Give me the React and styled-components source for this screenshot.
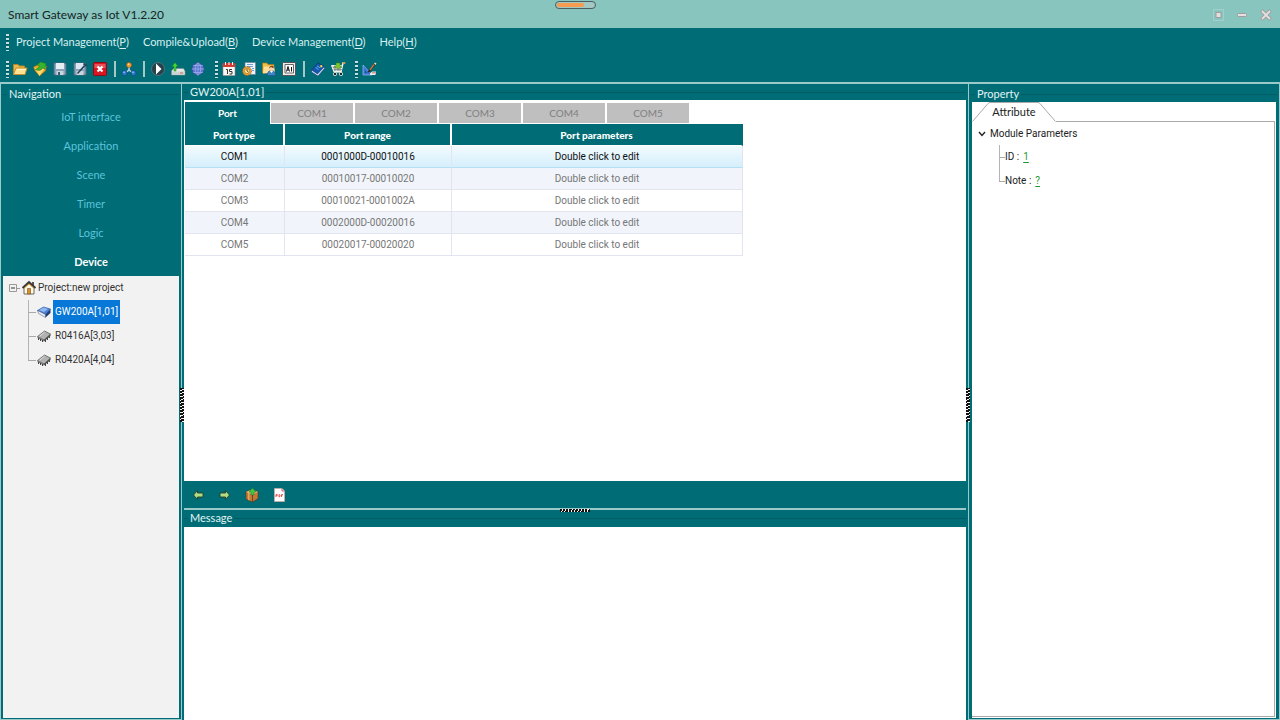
import React, { useState } from 'react';
import styled, { createGlobalStyle } from 'styled-components';

const teal = '#006c75';
const edge = '#9ccaca';
const dataFont = 'Roboto, "Liberation Sans", sans-serif';

const GlobalStyle = createGlobalStyle`
  * { box-sizing: border-box; }
  body {
    margin: 0;
    background: ${teal};
    font-family: Lato, "Open Sans", sans-serif;
    font-size: 11px;
    line-height: 16px;
    color: #333;
  }
  button { font: inherit; color: inherit; border: 0; padding: 0; background: none; cursor: pointer; }
`;

const Window = styled.div`
  min-height: 100vh;
  display: flex;
  flex-direction: column;
`;

const TitleBar = styled.header`
  position: relative;
  display: flex;
  align-items: center;
  justify-content: space-between;
  height: 28px;
  padding: 2px 4px 0 8px;
  background: #87c5be;
`;

const WindowTitle = styled.h1`
  margin: 0;
  font-size: 12px;
  font-weight: 400;
  color: #142424;
`;

const ProgressPill = styled.div`
  position: absolute;
  top: 1px;
  left: 555px;
  width: 41px;
  height: 8px;
  padding: 1px;
  border: 1px solid #4c5f60;
  border-radius: 4px;
  background: #a3c8c4;
  &::after {
    content: '';
    display: block;
    width: 27px;
    height: 4px;
    border-radius: 2px;
    background: #f79b4e;
  }
`;

const WindowButtons = styled.div`
  display: flex;
  align-items: center;
  gap: 4px;
`;

const WindowButton = styled.button`
  width: 20px;
  height: 20px;
  display: grid;
  place-items: center;
`;

const MenuBar = styled.nav`
  display: flex;
  align-items: center;
  height: 28px;
  padding-left: 4px;
  color: #d9f0f0;
`;

const MenuButton = styled.button`
  margin-right: 14px;
  white-space: nowrap;
  u { text-underline-offset: 2px; }
`;

const Grip = styled.span`
  width: 3px;
  height: 17px;
  margin: 0 ${p => p.$after}px 0 ${p => p.$before}px;
  background: repeating-linear-gradient(#c9dfdf 0 2px, #00525a 2px 3px, ${teal} 3px 4px);
`;

const ToolBar = styled.div`
  display: flex;
  align-items: center;
  height: 26px;
  padding-left: 4px;
`;

const ToolButton = styled.button`
  width: 20px;
  height: 20px;
  display: grid;
  place-items: center;
`;

const Divider = styled.span`
  width: 2px;
  height: 16px;
  margin: 0 3px 0 4px;
  background: #a8c8c6;
`;

const Workspace = styled.main`
  flex: 1;
  display: grid;
  grid-template-columns: 182px minmax(0, 1fr) 312px;
  border-top: 2px solid ${edge};
`;

const SidePanel = styled.aside`
  position: relative;
  display: flex;
  flex-direction: column;
  padding: 2px 2px 1px;
  border: solid ${edge};
  border-width: 0 1px 1px;
`;

const CenterPanel = styled.section`
  display: flex;
  flex-direction: column;
  padding: 0 2px;
`;

const GroupTitle = styled.h2`
  display: flex;
  align-items: center;
  margin: 0;
  height: 16px;
  font-size: 11px;
  font-weight: 400;
  color: #e3f4f4;
  white-space: nowrap;
  &::before, &::after {
    content: '';
    height: 1px;
    background: #005c65;
  }
  &::before { width: 4px; margin-right: 2px; }
  &::after { flex: 1; margin-left: 2px; }
`;

const NavList = styled.nav`
  display: flex;
  flex-direction: column;
`;

const NavItem = styled.button`
  height: 29px;
  font-weight: ${p => (p.$active ? 700 : 400)};
  color: ${p => (p.$active ? '#fff' : '#5bc4dc')};
`;

const Tree = styled.div`
  flex: 1;
  padding: 0 6px;
  font-family: ${dataFont};
  font-size: 10px;
  background: #f2f2f2;
`;

const TreeRoot = styled.button`
  display: flex;
  align-items: center;
  height: 24px;
  gap: 1px;
  white-space: nowrap;
`;

const TreeBranch = styled.ul`
  list-style: none;
  margin: 0 0 0 ${p => p.$indent}px;
  padding: 0;
`;

const TreeNode = styled.li`
  display: flex;
  align-items: center;
  height: 24px;
  background:
    linear-gradient(#aaa, #aaa) 0 50% / ${p => p.$stem || 8}px 1px no-repeat,
    linear-gradient(#b4b4b4, #b4b4b4) 0 0 / 1px ${p => (p.$last ? '50%' : '100%')} no-repeat;
  padding-left: ${p => p.$stem || 8}px;
`;

const TreeLabel = styled.button`
  height: 24px;
  margin-left: 1px;
  padding: 0 2px;
  white-space: nowrap;
  color: ${p => (p.$selected ? '#fff' : '#333')};
  background: ${p => (p.$selected ? '#0878d8' : 'transparent')};
`;

const PortArea = styled.div`
  flex: 381 1 0;
  padding: 2px 1px;
  background: #fff;
`;

const TabStrip = styled.div`
  display: flex;
  height: 22px;
`;

const Tab = styled.button`
  width: ${p => (p.$active ? 85 : 84)}px;
  height: ${p => (p.$active ? 22 : 21)}px;
  align-self: flex-end;
  border: solid #fff;
  border-width: ${p => (p.$active ? '0' : '0 1px 1px')};
  font-weight: ${p => (p.$active ? 700 : 400)};
  color: ${p => (p.$active ? '#fff' : '#808080')};
  background: ${p => (p.$active ? teal : '#bfbfbf')};
  font-size: 10px;
`;

const PortTable = styled.table`
  width: 558px;
  table-layout: fixed;
  border-collapse: separate;
  border-spacing: 0;
  text-align: center;
  font-family: ${dataFont};
  font-size: 10px;
  th, td { height: 22px; padding: 0; }
  th {
    font-family: Lato, sans-serif;
    font-weight: 900;
    color: #fff;
    background: ${teal};
    border-right: 2px solid #fff;
    border-bottom: 1px solid #fff;
  }
  th:last-child { border-right-color: ${teal}; }
`;

const PortRow = styled.tr`
  color: ${p => (p.$selected ? '#111' : '#777')};
  background: ${p => (p.$selected ? 'linear-gradient(#f3fbff, #d3eefb)' : p.$striped ? '#f1f5fb' : '#fff')};
  td {
    border-right: 1px solid #e2e5f0;
    border-bottom: 1px solid ${p => (p.$selected ? '#b4e0f5' : '#e2e5f0')};
  }
`;

const ActionBar = styled.div`
  display: flex;
  align-items: center;
  height: 27px;
  gap: 7px;
  padding-left: 4px;
`;

const MessageSection = styled.section`
  position: relative;
  flex: 212 1 0;
  display: flex;
  flex-direction: column;
  border-top: 2px solid ${edge};
`;

const MessageLog = styled.div`
  flex: 1;
  margin-top: 1px;
  background: #fff;
`;

const VerticalSash = styled.span`
  position: absolute;
  top: calc(50% - 14px);
  ${p => p.$side}: -3px;
  width: 4px;
  height: 34px;
  background: repeating-linear-gradient(160deg, #111 0 2px, #f4f4f4 2px 3px);
`;

const HorizontalSash = styled.span`
  position: absolute;
  top: -1px;
  left: calc(50% - 15px);
  width: 30px;
  height: 3px;
  background: repeating-linear-gradient(110deg, #111 0 2px, #f4f4f4 2px 3px);
`;

const PropertyBody = styled.div`
  flex: 1;
  display: flex;
  flex-direction: column;
  margin: 0 1px 0 1px;
  padding: 0 1px 1px 0;
  background: #fff;
`;

const AttributeStrip = styled.div`
  display: flex;
  align-items: flex-end;
  height: 20px;
  &::after {
    content: '';
    flex: 1;
    height: 1px;
    background: #aaa;
  }
`;

const AttributeTab = styled.button`
  position: relative;
  width: 84px;
  height: 20px;
  color: #222;
  svg { position: absolute; inset: 0; }
`;

const AttributePane = styled.div`
  flex: 1;
  padding: 0 6px;
  border: solid #aaa;
  border-width: 0 1px 1px 0;
  font-size: 10px;
  font-family: ${dataFont};
  color: #222;
`;

const ParamHeading = styled.button`
  display: flex;
  align-items: center;
  gap: 4px;
  height: 23px;
`;

const ValueLink = styled.a`
  margin-left: 4px;
  color: #1d9a2b;
  text-underline-offset: 2px;
`;

const ParamText = styled.span`
  white-space: nowrap;
`;

const Icon = ({ children }) => (
  <svg width="16" height="16" viewBox="0 0 16 16" fill="none" aria-hidden="true">{children}</svg>
);

const icons = {
  open: (
    <>
      <path d="M1.500 12.500V3.500h4.500l1.500 1.500h5v2" fill="#e9b84c" stroke="#b98524" />
      <path d="M1.500 13.500 4 7h11l-2 6.500z" fill="#ffe294" stroke="#c98e2b" />
      <path d="M5 8.500h8.500" stroke="#fff4c8" />
    </>
  ),
  save2: (
    <>
      <path d="M1.500 6 7 3l7.500 2-1 5-6 5-4.500-5z" fill="#e7a624" stroke="#8d651b" strokeWidth=".6" />
      <path d="m2 6 5 3.500 7-4L7.500 15z" fill="#ffd96a" />
      <path d="M8.500 1 14 2.500 13 8l-2.500-1C9.500 9.500 7 10 3.500 8.500 6.500 7.500 7.500 5.500 7.200 4.800L5 4z" fill="#35b52d" stroke="#1b7720" strokeWidth=".5" />
    </>
  ),
  save: (
    <>
      <path d="M2 2h11l1 1v11H2z" fill="#8ba3b8" stroke="#4b6b84" />
      <path d="M4 2h8v6H4z" fill="#e6eef3" />
      <path d="M4.500 10h7v4h-7z" fill="#c9d5dc" />
      <path d="M6 11h2v3H6z" fill="#3d5d73" />
    </>
  ),
  saveAs: (
    <>
      <path d="M2 2h11l1 1v11H2z" fill="#8ba3b8" stroke="#4b6b84" />
      <path d="M4 2h8v6H4z" fill="#dbe6ee" />
      <path d="M4.500 10h7v4h-7z" fill="#c9d5dc" />
      <path d="m5 12 7-8 1.500 1L6 13z" fill="#27445f" />
      <path d="M11.500 2.500 15 5" stroke="#27445f" strokeWidth="2" />
    </>
  ),
  close: (
    <>
      <rect x="1.500" y="1.500" width="13" height="13" rx="1" fill="#d81520" stroke="#870d16" />
      <path d="M2.500 3h11v4h-11z" fill="#e9515a" />
      <path d="m5.500 5.500 5 5m0-5-5 5" stroke="#fff" strokeWidth="2.200" />
    </>
  ),
  network: (
    <>
      <path d="M8 4v5l-4 3m4-3 4 3" stroke="#b8d4ef" strokeWidth="1.500" />
      <circle cx="8" cy="4" r="2.500" fill="#eda237" stroke="#9c5614" strokeWidth=".6" />
      <circle cx="3.500" cy="12" r="2.500" fill="#2d7cd1" stroke="#103e7c" strokeWidth=".6" />
      <circle cx="12.500" cy="12" r="2.500" fill="#2d7cd1" stroke="#103e7c" strokeWidth=".6" />
      <circle cx="7.500" cy="3.200" r=".8" fill="#ffe09b" /><circle cx="3" cy="11.200" r=".8" fill="#a7d5ff" /><circle cx="12" cy="11.200" r=".8" fill="#a7d5ff" />
    </>
  ),
  play: (
    <>
      <circle cx="8" cy="8" r="6.500" fill="#26414a" stroke="#52717a" />
      <path d="M6 2.500 11.500 8 6 13.500z" fill="#fff" />
    </>
  ),
  upload: (
    <>
      <path d="m1.500 10 2-2.500h10l1.500 2.500v4H1.500z" fill="#e4e9e8" stroke="#7c8a8b" strokeWidth=".7" />
      <path d="M2 10.500h12.500v3H2z" fill="#cbd4d2" />
      <path d="M10 12h3" stroke="#d26e62" />
      <path d="M4 10V5.500H2L5 1.500l3 4H6V10z" fill="#45d53a" stroke="#15851f" strokeWidth=".5" />
    </>
  ),
  globe: (
    <>
      <circle cx="8" cy="8" r="6" fill="#5a74cb" stroke="#3b50a0" />
      <ellipse cx="8" cy="8" rx="2.800" ry="6" stroke="#9aaeea" strokeWidth=".8" />
      <path d="M2 8h12M3.200 4.500h9.600M3.200 11.500h9.600M8 2v12" stroke="#9aaeea" strokeWidth=".8" />
    </>
  ),
  calendar: (
    <>
      <path d="M2 3h12v11.500H2z" fill="#faf8f4" stroke="#9a8f8b" strokeWidth=".6" />
      <path d="M2 2h12v4H2z" fill="#d63b32" />
      <path d="M4.500 1v3M8 1v3m3.500-3v3" stroke="#fff" />
      <path d="M5 8.500h1.500V13M11 8.500H8.500v2H11V13H8.500" stroke="#343434" />
    </>
  ),
  report: (
    <>
      <path d="M4 1.500h10.500v12H4z" fill="#eff3f8" stroke="#6983a5" strokeWidth=".7" />
      <path d="M6 3.500h6M6 5.500h6m-1 2h2m-2 2h2" stroke="#6aa2d8" />
      <circle cx="6" cy="10" r="4.500" fill="#dfa03b" stroke="#8a5615" strokeWidth=".7" strokeDasharray="1.500 .8" />
      <circle cx="6" cy="10" r="2.500" fill="#ffe4a0" stroke="#a86d19" strokeWidth=".6" />
      <path d="M6 8v2l1.500 1" stroke="#7b4c16" />
    </>
  ),
  userFolder: (
    <>
      <path d="M1.500 12V2H6l1 1.500h6V12z" fill="#f2bd47" stroke="#a87520" strokeWidth=".7" />
      <path d="M3 5.500h10l1 6-12 1z" fill="#ffe09a" />
      <path d="M6.500 14.500c0-4 1.500-5 4-5s4 1.500 4 5z" fill="#3f85ca" stroke="#1c5086" strokeWidth=".6" />
      <circle cx="10.500" cy="7.500" r="2.500" fill="#ffd2a5" />
      <path d="M8 7.500c0-3 4.500-4 5-1l-1 .5-2-1z" fill="#784225" />
      <path d="m9 10 1.500 2 1.500-2z" fill="#fff" />
    </>
  ),
  textBox: (
    <>
      <path d="M1.500 1.500h13v13h-13z" fill="#eee" stroke="#555" />
      <path d="M4 3.500h8.500v8.500H4z" fill="#fff" stroke="#666" />
      <path d="M5.500 10.500 7 5.500l1.500 5M6 9h2m2.500-3v4.500" stroke="#111" />
    </>
  ),
  book: (
    <>
      <path d="m1.500 9 6.500-7 6.500 3.500-6.500 8z" fill="#1458ae" stroke="#082c69" strokeWidth=".6" />
      <path d="m1.500 9 6 4 7-7.500V7.500L8 15l-6.500-4z" fill="#e1ecf4" stroke="#123f86" strokeWidth=".6" />
      <path d="m5.500 6.500 3 2m-1.500-3.500 3 1.700" stroke="#65aeee" />
      <path d="m10 4.500 2-.5.500 2-2 .5z" fill="#ffd83a" />
    </>
  ),
  cart: (
    <>
      <path d="M1.500 4.500H12L11 11H4z" fill="#c9d0cc" stroke="#eef3ec" />
      <path d="M15 2h-2l-2 8.500H4.500" stroke="#eef3ec" strokeWidth="1.500" />
      <path d="M3 6.500h9M4 8.500h8M5 5v5m3-5v5m2-5v5" stroke="#6a7a72" strokeWidth=".7" />
      <path d="M8 0v2h2v3h2L8 8 4 5h2V2h2z" fill="#7cc52f" stroke="#33731e" strokeWidth=".4" />
      <path d="M13 2h2.500" stroke="#dd7d30" strokeWidth="1.500" />
      <circle cx="5" cy="13" r="1.700" fill="#202a29" stroke="#e9eeee" strokeWidth=".8" /><circle cx="11" cy="13" r="1.700" fill="#202a29" stroke="#e9eeee" strokeWidth=".8" />
    </>
  ),
  design: (
    <>
      <path d="M2 4v10h9z" fill="#3e71d6" stroke="#9cbcff" strokeWidth=".7" />
      <path d="M4 9.500V12h2.500z" fill="#006c75" />
      <path d="m6.500 11 6.500-8.500 1.500 1L8.500 11.500z" fill="#33261f" />
      <path d="m8.500 8.500 4-5.500 1 1-4 5.500z" fill="#d27835" />
      <path d="m13 2.500 1-1 1.500 1-1 1.500z" fill="#f8d9b8" />
      <path d="m9 12.500 2-2h4V13l-1 1H9z" fill="#eceff0" /><path d="M11 11h4v1.500h-4z" fill="#d99a91" />
    </>
  ),
  back: <path d="M7.500 3.500 3.500 8l4 4.500V10H13V6H7.500z" fill="#b2dc85" stroke="#263f26" strokeWidth=".9" />,
  forward: <path d="M8.500 3.500 12.500 8l-4 4.500V10H3V6h5.500z" fill="#b2dc85" stroke="#263f26" strokeWidth=".9" />,
  pack: (
    <>
      <path d="m2 5 6-2.500L14 5v6.500L8.500 15 2 12z" fill="#c07a38" stroke="#673916" strokeWidth=".6" />
      <path d="m2 5 6.500 2.500L14 5 8 2.500z" fill="#efbd73" />
      <path d="M8.500 7.500V15" stroke="#744219" /><path d="m4 6 1.500.6v7L4 13z" fill="#e1a65d" />
      <path d="M7 8V5H5l3.500-4L12 5h-2v3z" fill="#41c842" stroke="#19752a" strokeWidth=".5" />
    </>
  ),
  pdf: (
    <>
      <path d="M3.500 1.500H11L13.500 4v10.500h-10z" fill="#fff" stroke="#d8a9ab" strokeWidth=".7" />
      <path d="M11 1.500V4h2.500" fill="#eee" stroke="#b52c35" strokeWidth=".7" />
      <path d="M5 10V7.500h1.200v1.200H5m3 1.300V7.500c1.500 0 1.500 2.500 0 2.500m2.500 0V7.500H12m-1.500 1.200h1" stroke="#d43a40" strokeWidth=".8" />
    </>
  ),
  home: (
    <>
      <path d="M3 7.500 8 3l5 4.500V14H3z" fill="#fff8e6" stroke="#4c4540" strokeWidth=".8" />
      <path d="M11 2h2v4h-2z" fill="#555" /><path d="M1.500 8 8 2l6.500 6" stroke="#3b3938" strokeWidth="1.800" />
      <path d="M3.500 8 8 4l4.500 4" stroke="#e3a32e" /><path d="M6.500 8.500h3V14h-3z" fill="#d89028" stroke="#76501c" strokeWidth=".6" />
    </>
  ),
  gateway: (
    <>
      <path d="m1.500 6.500 6-3.500 7 2-4.500 5.500z" fill="#4d80d4" stroke="#264d91" strokeWidth=".6" />
      <path d="m3 6.200 4.500-2.700L12 5 8 8z" fill="#8eb9f5" />
      <path d="M1.500 6.500 9.500 10.500v3L2.500 9.500z" fill="#e9eef6" stroke="#44546d" strokeWidth=".5" /><path d="m9.500 10.500 5-5.500v4l-5 4.500z" fill="#1f3f78" />
    </>
  ),
  chip: (
    <>
      <path d="m1.500 8.500 7-5.500 6 3-6.500 6z" fill="#b1b1b1" stroke="#555" strokeWidth=".7" />
      <path d="M1.500 8.500 8 12v1.500L1.500 10z" fill="#777" /><path d="m8 12 6.500-6v2L8 13.500z" fill="#4a4a4a" />
      <path d="M2.500 10v2m2-1v2m2-1v2m3-2v2m2-4v2m2-3.500V10" stroke="#333" strokeWidth=".9" /><path d="m3.500 8.300 5-4" stroke="#ddd" />
    </>
  ),
};

const toolGroups = [
  [['open', 'Open project'], ['save2', 'Import project'], ['save', 'Save'], ['saveAs', 'Save as'], ['close', 'Close project']],
  [['network', 'Topology']],
  [['play', 'Run'], ['upload', 'Upload'], ['globe', 'Network']],
  [['calendar', 'Schedule'], ['report', 'Report'], ['userFolder', 'Users'], ['textBox', 'Labels']],
  [['book', 'Manual'], ['cart', 'Store']],
  [['design', 'Design']],
];

const actions = [['back', 'Back'], ['forward', 'Forward'], ['pack', 'Pack'], ['pdf', 'Export PDF']];
const menus = [['Project Management', 'P'], ['Compile&Upload', 'B'], ['Device Management', 'D'], ['Help', 'H']];
const sections = ['IoT interface', 'Application', 'Scene', 'Timer', 'Logic', 'Device'];
const devices = [['GW200A[1,01]', 'gateway'], ['R0416A[3,03]', 'chip'], ['R0420A[4,04]', 'chip']];
const tabs = ['Port', 'COM1', 'COM2', 'COM3', 'COM4', 'COM5'];
const ports = [
  ['COM1', '0001000D-00010016'],
  ['COM2', '00010017-00010020'],
  ['COM3', '00010021-0001002A'],
  ['COM4', '0002000D-00020016'],
  ['COM5', '00020017-00020020'],
];

function TopBars() {
  return (
    <>
      <TitleBar>
        <WindowTitle>Smart Gateway as Iot V1.2.20</WindowTitle>
        <ProgressPill />
        <WindowButtons>
          <WindowButton aria-label="Restore">
            <Icon><path d="M3.500 2.500h10v11h-10z" stroke="#a2d0ca" /><path d="M6 5.500h5v5H6z" fill="#e4dfe0" stroke="#a29b9c" /></Icon>
          </WindowButton>
          <WindowButton aria-label="Minimize">
            <Icon><rect x="3.500" y="6.500" width="9" height="3" rx="1" fill="#e4dfe0" stroke="#a29b9c" /></Icon>
          </WindowButton>
          <WindowButton aria-label="Close">
            <Icon>
              <path d="m3.500 3.500 9 9m0-9-9 9" stroke="#a29b9c" strokeWidth="3.600" />
              <path d="m4 4 8 8m0-8-8 8" stroke="#e4dfe0" strokeWidth="1.800" />
            </Icon>
          </WindowButton>
        </WindowButtons>
      </TitleBar>
      <MenuBar>
        <Grip $before={2} $after={7} />
        {menus.map(([name, key]) => (
          <MenuButton key={name}>{name}(<u>{key}</u>)</MenuButton>
        ))}
      </MenuBar>
      <ToolBar>
        {toolGroups.map((group, i) => (
          <React.Fragment key={i}>
            {i === 0 && <Grip $before={2} $after={1} />}
            {(i === 1 || i === 2 || i === 4) && <Divider />}
            {(i === 3 || i === 5) && <Grip $before={7} $after={1} />}
            {group.map(([icon, label]) => (
              <ToolButton key={icon} aria-label={label}><Icon>{icons[icon]}</Icon></ToolButton>
            ))}
          </React.Fragment>
        ))}
      </ToolBar>
    </>
  );
}

function Navigation() {
  const [device, setDevice] = useState(0);
  return (
    <SidePanel>
      <GroupTitle>Navigation</GroupTitle>
      <NavList>
        {sections.map(name => <NavItem key={name} $active={name === 'Device'}>{name}</NavItem>)}
      </NavList>
      <Tree>
        <TreeRoot>
          <svg width="11" height="16" viewBox="0 0 11 16" fill="none" aria-hidden="true">
            <path d="M.5 4.500h7v7h-7zM8 8.500h3" stroke="#999" /><path d="M2 8h4" stroke="#333" />
          </svg>
          <Icon>{icons.home}</Icon>
          <span>Project:new project</span>
        </TreeRoot>
        <TreeBranch $indent={19}>
          {devices.map(([name, icon], i) => (
            <TreeNode key={name} $last={i === devices.length - 1}>
              <Icon>{icons[icon]}</Icon>
              <TreeLabel $selected={i === device} onClick={() => setDevice(i)}>{name}</TreeLabel>
            </TreeNode>
          ))}
        </TreeBranch>
      </Tree>
      <VerticalSash $side="right" />
    </SidePanel>
  );
}

function Ports() {
  return (
    <CenterPanel>
      <GroupTitle>GW200A[1,01]</GroupTitle>
      <PortArea>
        <TabStrip role="tablist">
          {tabs.map((name, i) => <Tab key={name} role="tab" aria-selected={i === 0} $active={i === 0}>{name}</Tab>)}
        </TabStrip>
        <PortTable>
          <colgroup><col width="100" /><col width="167" /><col width="291" /></colgroup>
          <thead>
            <tr><th>Port type</th><th>Port range</th><th>Port parameters</th></tr>
          </thead>
          <tbody>
            {ports.map(([name, range], i) => (
              <PortRow key={name} $selected={i === 0} $striped={i % 2 === 1}>
                <td>{name}</td><td>{range}</td><td>Double click to edit</td>
              </PortRow>
            ))}
          </tbody>
        </PortTable>
      </PortArea>
      <ActionBar>
        {actions.map(([icon, label]) => (
          <ToolButton key={icon} aria-label={label}><Icon>{icons[icon]}</Icon></ToolButton>
        ))}
      </ActionBar>
      <MessageSection>
        <GroupTitle>Message</GroupTitle>
        <MessageLog />
        <HorizontalSash />
      </MessageSection>
    </CenterPanel>
  );
}

function Properties() {
  return (
    <SidePanel>
      <GroupTitle>Property</GroupTitle>
      <PropertyBody>
        <AttributeStrip>
          <AttributeTab>
            <svg width="84" height="20" viewBox="0 0 84 20" fill="none" aria-hidden="true">
              <path d="M.5 19.500 16 1.500Q17 .5 18 .5h48q1 0 2 1l15.500 18" stroke="#aaa" />
            </svg>
            Attribute
          </AttributeTab>
        </AttributeStrip>
        <AttributePane>
          <ParamHeading>
            <svg width="8" height="8" viewBox="0 0 8 8" fill="none" aria-hidden="true"><path d="m1 2 3 3.500L7 2" stroke="#222" strokeWidth="1.400" /></svg>
            Module Parameters
          </ParamHeading>
          <TreeBranch $indent={21}>
            <TreeNode $stem={6}><ParamText>ID :<ValueLink href="#id">1</ValueLink></ParamText></TreeNode>
            <TreeNode $stem={6} $last><ParamText>Note :<ValueLink href="#note">?</ValueLink></ParamText></TreeNode>
          </TreeBranch>
        </AttributePane>
      </PropertyBody>
      <VerticalSash $side="left" />
    </SidePanel>
  );
}

export default function App() {
  return (
    <>
      <GlobalStyle />
      <Window>
        <TopBars />
        <Workspace>
          <Navigation />
          <Ports />
          <Properties />
        </Workspace>
      </Window>
    </>
  );
}
